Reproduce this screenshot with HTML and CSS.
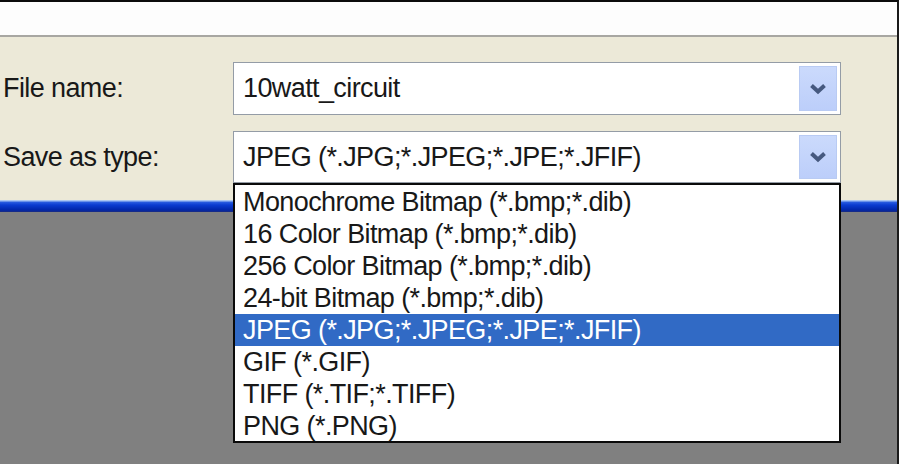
FILE: index.html
```html
<!DOCTYPE html>
<html lang="en">
<head>
  <meta charset="UTF-8" />
  <title>Save As</title>
  <link rel="stylesheet" href="styles.css">
</head>
<body>

  <div class="window">
    <div class="top-strip"></div>

    <div class="panel">
      <div class="row">
        <label class="row-label">File name:</label>
        <div class="field">
          <span class="field-text">10watt_circuit</span>
          <span class="drop-btn">
            <svg width="18" height="12" viewBox="0 0 18 12"><polyline points="2.5,2.5 9,8.5 15.5,2.5" fill="none" stroke="#46597f" stroke-width="4" stroke-linejoin="miter"/></svg>
          </span>
        </div>
      </div>

      <div class="row">
        <label class="row-label">Save as type:</label>
        <div class="field field-open">
          <span class="field-text">JPEG (*.JPG;*.JPEG;*.JPE;*.JFIF)</span>
          <span class="drop-btn">
            <svg width="18" height="12" viewBox="0 0 18 12"><polyline points="2.5,2.5 9,8.5 15.5,2.5" fill="none" stroke="#46597f" stroke-width="4" stroke-linejoin="miter"/></svg>
          </span>

          <ul class="drop-list">
            <li>Monochrome Bitmap (*.bmp;*.dib)</li>
            <li>16 Color Bitmap (*.bmp;*.dib)</li>
            <li>256 Color Bitmap (*.bmp;*.dib)</li>
            <li>24-bit Bitmap (*.bmp;*.dib)</li>
            <li class="selected">JPEG (*.JPG;*.JPEG;*.JPE;*.JFIF)</li>
            <li>GIF (*.GIF)</li>
            <li>TIFF (*.TIF;*.TIFF)</li>
            <li>PNG (*.PNG)</li>
          </ul>
        </div>
      </div>
    </div>

    <div class="taskbar"></div>
    <div class="desk"></div>
  </div>

</body>
</html>
```

FILE: styles.css
```css
:root {
  --beige: #ece9d8;
  --desk: #808080;
  --select: #316ac5;
  --field-border: #949ca6;
}

html, body {
  margin: 0;
  padding: 0;
}

body {
  width: 899px;
  height: 464px;
  overflow: hidden;
  font-family: "Liberation Sans", Arial, sans-serif;
  font-size: 27px;
  letter-spacing: -0.6px;
  color: #181818;
  background: var(--desk);
}

.window {
  height: 464px;
  display: flex;
  flex-direction: column;
  border-top: 2px solid #0c0c0c;
  border-right: 2px solid #1a1a1a;
  box-sizing: border-box;
}

.top-strip {
  height: 33px;
  background: #fdfdfd;
  border-bottom: 2px solid #a8a7a2;
}

.panel {
  height: 163px;
  background: var(--beige);
  padding-top: 25px;
  box-sizing: border-box;
  display: flex;
  flex-direction: column;
  gap: 16px;
}

.row {
  display: flex;
  align-items: center;
}

.row-label {
  width: 230px;
  padding-left: 3px;
}

.field {
  position: relative;
  width: 608px;
  height: 53px;
  box-sizing: border-box;
  border: 1px solid var(--field-border);
  background: #fff;
  display: flex;
  align-items: center;
  justify-content: space-between;
  padding-left: 9px;
  padding-right: 3px;
}

.field-open {
  height: 52px;
}

.drop-btn {
  width: 38px;
  height: 45px;
  box-sizing: border-box;
  background: linear-gradient(#cbdafc, #bccefa);
  border: 1px solid #b9cbf3;
  display: flex;
  align-items: center;
  justify-content: center;
}

.field-open .drop-btn {
  height: 44px;
}

.drop-list {
  position: absolute;
  top: 51px;
  left: -1px;
  width: 608px;
  height: 260px;
  box-sizing: border-box;
  margin: 0;
  padding: 1px 0 0;
  list-style: none;
  background: #fff;
  border: 2px solid #0a0a0a;
  z-index: 2;
}

.drop-list li {
  height: 32px;
  line-height: 32px;
  padding-left: 8px;
  white-space: nowrap;
}

.drop-list li.selected {
  background: var(--select);
  color: #fff;
}

.taskbar {
  height: 12px;
  background: linear-gradient(#a9c6f2 0, #a9c6f2 1px, #2a5ee0 2px, #0a3cd0 5px, #0026a8 10px, #1c2c80 12px);
}

.desk {
  flex: 1;
  background: var(--desk);
}
```
